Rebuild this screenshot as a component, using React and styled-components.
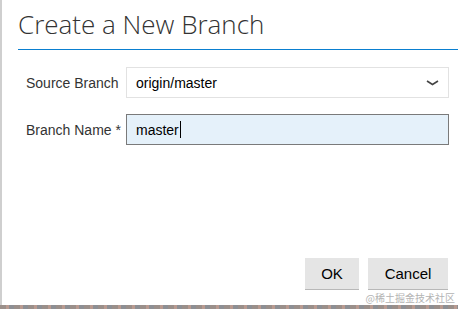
import React from "react";
import styled, { createGlobalStyle } from "styled-components";

const Global = createGlobalStyle`
  html, body {
    margin: 0;
    padding: 0;
    background: #fff;
  }
  body {
    width: 458px;
    height: 309px;
    overflow: hidden;
  }
`;

const Screen = styled.div`
  width: 458px;
  height: 309px;
  display: flex;
  flex-direction: column;
  background: #fff;
`;

const Dialog = styled.div`
  flex: 1;
  display: flex;
  flex-direction: column;
  border-left: 2px solid #cfcfcf;
  padding-left: 16px;
`;

const Title = styled.h1`
  margin: 0;
  padding: 8px 0 9px 0;
  font-family: "Open Sans", "Noto Sans", sans-serif;
  font-weight: 300;
  font-size: 26px;
  line-height: 32px;
  color: #333;
  border-bottom: 1px solid #0a7fd0;
`;

const Form = styled.div`
  display: flex;
  flex-direction: column;
  gap: 16px;
  padding: 17px 9px 0 8px;
`;

const Row = styled.div`
  display: grid;
  grid-template-columns: 100px 1fr;
  align-items: center;
`;

const Label = styled.label`
  font-family: "Liberation Sans", Arial, sans-serif;
  font-size: 14px;
  color: #333;
  white-space: nowrap;
  overflow: hidden;
`;

const Field = styled.div`
  position: relative;
  height: 31px;
  box-sizing: border-box;
  display: flex;
  align-items: center;
  padding: 0 9px;
  border: 1px solid ${(p) => (p.$focused ? "#7a7a7a" : "#e2e2e2")};
  background: ${(p) => (p.$focused ? "#e5f1fa" : "#fff")};
  font-family: "Liberation Sans", Arial, sans-serif;
  font-size: 14px;
  color: #000;
`;

const Caret = styled.span`
  display: inline-block;
  width: 1px;
  height: 17px;
  background: #000;
  margin-left: 1px;
`;

const Chevron = styled.svg`
  position: absolute;
  right: 9px;
  top: 50%;
  transform: translateY(-50%);
`;

const Footer = styled.div`
  margin-top: auto;
  display: flex;
  justify-content: flex-end;
  gap: 9px;
  padding-right: 10px;
`;

const Button = styled.button`
  height: 32px;
  min-width: ${(p) => p.$w}px;
  border: none;
  border-bottom: 1px solid #b8b8b8;
  background: #e5e5e5;
  font-family: "Liberation Sans", Arial, sans-serif;
  font-size: 15px;
  color: #000;
  padding: 0 12px;
`;

const Watermark = styled.div`
  align-self: flex-end;
  padding: 2px 3px 1px 0;
  font-family: "Noto Sans CJK SC", sans-serif;
  font-size: 10px;
  line-height: 12px;
  color: #b4b4b4;
`;

const Strip = styled.div`
  height: 4px;
  background: repeating-linear-gradient(90deg, #9a8f8a 0 6px, #b89a90 6px 9px, #8d8f94 9px 14px);
`;

export default function App() {
  return (
    <Screen>
      <Global />
      <Dialog>
        <Title>Create a New Branch</Title>
        <Form>
          <Row>
            <Label>Source Branch</Label>
            <Field>
              origin/master
              <Chevron width="13" height="8" viewBox="0 0 13 8">
                <path d="M1 2 L6.5 5.5 L12 2" fill="none" stroke="#444" strokeWidth="1.6" />
              </Chevron>
            </Field>
          </Row>
          <Row>
            <Label>Branch Name *</Label>
            <Field $focused>
              master
              <Caret />
            </Field>
          </Row>
        </Form>
        <Footer>
          <Button $w={54}>OK</Button>
          <Button $w={80}>Cancel</Button>
        </Footer>
        <Watermark>@稀土掘金技术社区</Watermark>
      </Dialog>
      <Strip />
    </Screen>
  );
}
